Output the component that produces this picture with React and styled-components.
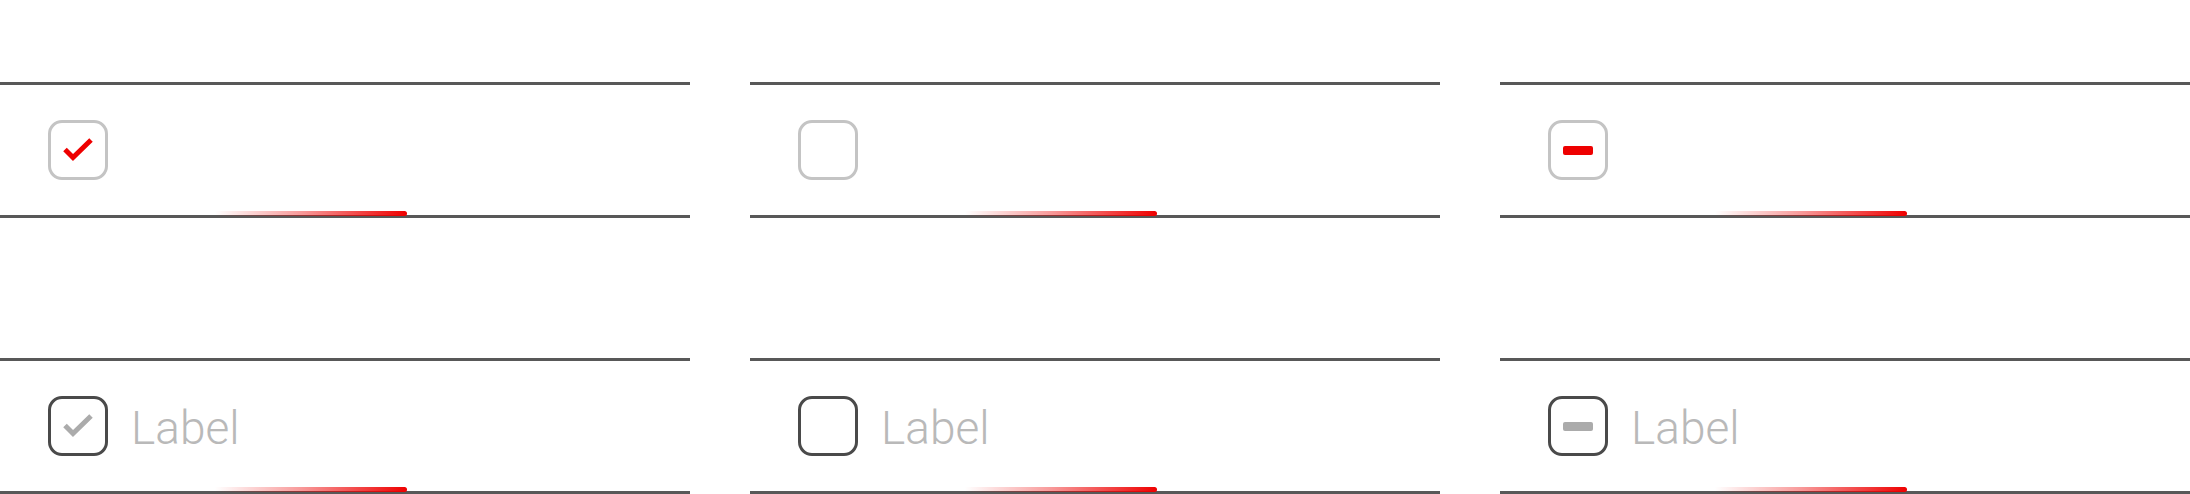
import React from "react";
import styled, { createGlobalStyle } from "styled-components";

const Global = createGlobalStyle`
  html, body { margin: 0; padding: 0; background: #ffffff; }
  body { font-family: Roboto, "Liberation Sans", sans-serif; }
`;

const Page = styled.div`
  display: grid;
  grid-template-columns: repeat(3, 690px);
  column-gap: 60px;
  row-gap: 140px;
  padding-top: 82px;
  width: 2190px;
`;

const Cell = styled.div`
  position: relative;
  box-sizing: content-box;
  height: 130px;
  border-top: 3px solid #585858;
  border-bottom: 3px solid #585858;
  display: flex;
  align-items: center;
  gap: 23px;
  padding-left: 48px;
`;

const Box = styled.div`
  box-sizing: border-box;
  width: 60px;
  height: 60px;
  border: 3px solid ${(p) => (p.$dark ? "#4a4a4a" : "#c4c4c4")};
  border-radius: 14px;
  display: flex;
  align-items: center;
  justify-content: center;
  flex: none;
`;

const Dash = styled.div`
  width: 30px;
  height: 9px;
  border-radius: 2px;
  background: ${(p) => p.$color};
`;

const Label = styled.span`
  font-family: Roboto, "Liberation Sans", sans-serif;
  font-weight: 300;
  font-size: 46px;
  line-height: 1;
  color: #b9b9b9;
  margin-top: 3px;
`;

const Focus = styled.div`
  position: absolute;
  left: 215px;
  width: 192px;
  bottom: -1px;
  height: 5px;
  border-radius: 0 3px 3px 0;
  background: linear-gradient(to right, rgba(238, 0, 0, 0), rgba(238, 0, 0, 0.4) 45%, #ee0000 100%);
`;

const Check = ({ color }) => (
  <svg width="30" height="24" viewBox="0 0 30 24" style={{ marginTop: "-1px" }}>
    <polyline
      points="2,11.5 10,19.5 28,2"
      fill="none"
      stroke={color}
      strokeWidth="5"
      strokeLinecap="butt"
      strokeLinejoin="miter"
    />
  </svg>
);

const Mark = ({ state, color }) => {
  if (state === "checked") return <Check color={color} />;
  if (state === "mixed") return <Dash $color={color} />;
  return null;
};

const Checkbox = ({ state, label }) => (
  <Cell>
    <Box $dark={!!label}>
      <Mark state={state} color={label ? "#ababab" : "#ee0000"} />
    </Box>
    {label && <Label>{label}</Label>}
    <Focus />
  </Cell>
);

export default function App() {
  return (
    <>
      <Global />
      <Page>
        <Checkbox state="checked" />
        <Checkbox state="unchecked" />
        <Checkbox state="mixed" />
        <Checkbox state="checked" label="Label" />
        <Checkbox state="unchecked" label="Label" />
        <Checkbox state="mixed" label="Label" />
      </Page>
    </>
  );
}
